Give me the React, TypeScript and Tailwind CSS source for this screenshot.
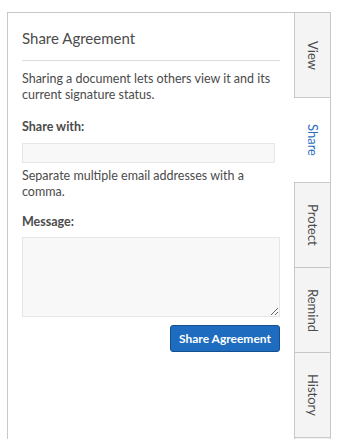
const tabs = ["View", "Share", "Protect", "Remind", "History", ""];

export default function App() {
  return (
    <div className="h-[439px] w-[341px] overflow-hidden bg-white pl-[7px] pt-[12px] font-['Lato',sans-serif] text-[#4b4b4b]">
      <div className="flex w-[324px]">
        <div className="h-[500px] flex-1 border-l border-t border-[#c8c8c8] px-[14px] pt-[15px]">
          <h2 className="border-b border-[#dcdcdc] pb-[12px] text-[15px] leading-[20px]">Share Agreement</h2>
          <p className="mt-[10px] text-[12.5px] leading-[16px]">
            Sharing a document lets others view it and its current signature status.
          </p>
          <div className="mt-[16px] text-[12.5px] font-bold leading-[16px]">Share with:</div>
          <input
            type="text"
            className="mt-[8px] block h-[20px] w-[253px] border border-[#e6e6e6] bg-[#f8f8f8] outline-none"
          />
          <p className="mt-[5px] text-[12.5px] leading-[16px]">Separate multiple email addresses with a comma.</p>
          <div className="mt-[14px] text-[12.5px] font-bold leading-[16px]">Message:</div>
          <textarea className="mt-[7px] block h-[80px] w-full resize border border-[#e6e6e6] bg-[#f8f8f8] outline-none" />
          <div className="mt-[8px] flex justify-end">
            <button className="h-[27px] w-[110px] rounded-[3px] border border-[#14508f] bg-[#1d6cc0] text-[12px] font-bold text-white">
              Share Agreement
            </button>
          </div>
        </div>
        <div className="flex w-[37px] flex-col border-r border-t border-[#c8c8c8]">
          {tabs.map((t) => (
            <div
              key={t || "last"}
              className={
                t === "Share"
                  ? "flex h-[85px] shrink-0 items-center justify-center border-b border-[#c8c8c8] bg-white text-[13px] text-[#2d6ec0] [writing-mode:vertical-rl]"
                  : "flex h-[85px] shrink-0 items-center justify-center border-b border-l border-[#c8c8c8] bg-[#f4f4f4] text-[13px] [writing-mode:vertical-rl]"
              }
            >
              {t}
            </div>
          ))}
        </div>
      </div>
    </div>
  );
}
